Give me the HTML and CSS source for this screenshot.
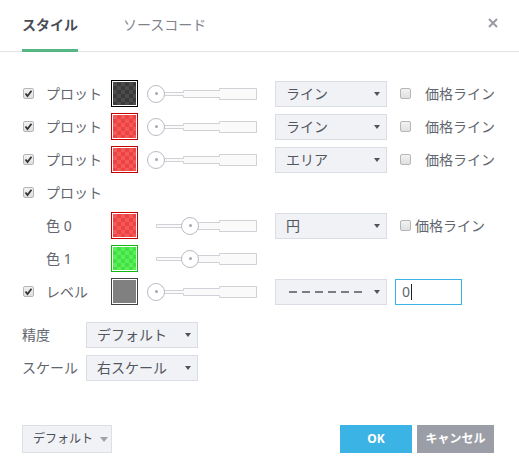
FILE: index.html
```html
<!DOCTYPE html>
<html lang="ja">
<head>
<meta charset="utf-8">
<title>スタイル</title>
<link rel="stylesheet" href="styles.css">
</head>
<body>
<div class="dialog">
  <div class="header">
    <div class="tab active">スタイル</div>
    <div class="tab">ソースコード</div>
    <div class="close"><svg width="10" height="10" viewBox="0 0 10 10"><path d="M1 1L9 9M9 1L1 9" stroke="#9a9ca3" stroke-width="2" fill="none"/></svg></div>
  </div>

  <div class="content">
    <div class="row">
      <span class="cb checked"><svg viewBox="0 0 11 11" width="11" height="11"><path d="M2.5 5.5L4.5 8L8.5 2.8" stroke="#333" stroke-width="1.8" fill="none"/></svg></span>
      <span class="label">プロット</span>
      <span class="swatch sw-dark"><span></span></span>
      <div class="slider"><svg class="track" width="101" height="12" viewBox="0 0 101 12"><path d="M0.5 4.5H27.5V2.5H63.5V0.5H100.5V11.5H63.5V9.5H27.5V7.5H0.5Z" fill="#fafafa" stroke="#cfd1d6"/></svg><span class="thumb"></span></div>
      <div class="select"><span>ライン</span><i class="arrow"></i></div>
      <div class="extra"><span class="cb"></span><span class="label">価格ライン</span></div>
    </div>

    <div class="row">
      <span class="cb checked"><svg viewBox="0 0 11 11" width="11" height="11"><path d="M2.5 5.5L4.5 8L8.5 2.8" stroke="#333" stroke-width="1.8" fill="none"/></svg></span>
      <span class="label">プロット</span>
      <span class="swatch sw-red"><span></span></span>
      <div class="slider"><svg class="track" width="101" height="12" viewBox="0 0 101 12"><path d="M0.5 4.5H27.5V2.5H63.5V0.5H100.5V11.5H63.5V9.5H27.5V7.5H0.5Z" fill="#fafafa" stroke="#cfd1d6"/></svg><span class="thumb"></span></div>
      <div class="select"><span>ライン</span><i class="arrow"></i></div>
      <div class="extra"><span class="cb"></span><span class="label">価格ライン</span></div>
    </div>

    <div class="row">
      <span class="cb checked"><svg viewBox="0 0 11 11" width="11" height="11"><path d="M2.5 5.5L4.5 8L8.5 2.8" stroke="#333" stroke-width="1.8" fill="none"/></svg></span>
      <span class="label">プロット</span>
      <span class="swatch sw-red"><span></span></span>
      <div class="slider"><svg class="track" width="101" height="12" viewBox="0 0 101 12"><path d="M0.5 4.5H27.5V2.5H63.5V0.5H100.5V11.5H63.5V9.5H27.5V7.5H0.5Z" fill="#fafafa" stroke="#cfd1d6"/></svg><span class="thumb"></span></div>
      <div class="select"><span>エリア</span><i class="arrow"></i></div>
      <div class="extra"><span class="cb"></span><span class="label">価格ライン</span></div>
    </div>

    <div class="row">
      <span class="cb checked"><svg viewBox="0 0 11 11" width="11" height="11"><path d="M2.5 5.5L4.5 8L8.5 2.8" stroke="#333" stroke-width="1.8" fill="none"/></svg></span>
      <span class="label">プロット</span>
    </div>

    <div class="row">
      <span></span>
      <span class="label">色 0</span>
      <span class="swatch sw-red"><span></span></span>
      <div class="slider"><svg class="track" width="101" height="12" viewBox="0 0 101 12"><path d="M0.5 4.5H27.5V2.5H63.5V0.5H100.5V11.5H63.5V9.5H27.5V7.5H0.5Z" fill="#fafafa" stroke="#cfd1d6"/></svg><span class="thumb mid"></span></div>
      <div class="select"><span>円</span><i class="arrow"></i></div>
      <div class="extra tight"><span class="cb"></span><span class="label">価格ライン</span></div>
    </div>

    <div class="row">
      <span></span>
      <span class="label">色 1</span>
      <span class="swatch sw-green"><span></span></span>
      <div class="slider"><svg class="track" width="101" height="12" viewBox="0 0 101 12"><path d="M0.5 4.5H27.5V2.5H63.5V0.5H100.5V11.5H63.5V9.5H27.5V7.5H0.5Z" fill="#fafafa" stroke="#cfd1d6"/></svg><span class="thumb mid"></span></div>
    </div>

    <div class="row">
      <span class="cb checked"><svg viewBox="0 0 11 11" width="11" height="11"><path d="M2.5 5.5L4.5 8L8.5 2.8" stroke="#333" stroke-width="1.8" fill="none"/></svg></span>
      <span class="label">レベル</span>
      <span class="swatch sw-gray"><span></span></span>
      <div class="slider"><svg class="track" width="101" height="12" viewBox="0 0 101 12"><path d="M0.5 4.5H27.5V2.5H63.5V0.5H100.5V11.5H63.5V9.5H27.5V7.5H0.5Z" fill="#fafafa" stroke="#cfd1d6"/></svg><span class="thumb"></span></div>
      <div class="select"><span class="dashes"></span><i class="arrow"></i></div>
      <div class="input"><span>0</span><span class="caret"></span></div>
    </div>

    <div class="opts">
      <div class="opt-row">
        <span class="label">精度</span>
        <div class="select"><span>デフォルト</span><i class="arrow"></i></div>
      </div>
      <div class="opt-row">
        <span class="label">スケール</span>
        <div class="select"><span>右スケール</span><i class="arrow"></i></div>
      </div>
    </div>
  </div>

  <div class="footer">
    <div class="btn-default"><span>デフォルト</span><i class="arrow light"></i></div>
    <div class="actions">
      <div class="btn ok">OK</div>
      <div class="btn cancel">キャンセル</div>
    </div>
  </div>
</div>
</body>
</html>
```

FILE: styles.css
```css
html, body {
  margin: 0;
  padding: 0;
  background: #fff;
}
body {
  font-family: "Noto Sans", "Noto Sans CJK JP", sans-serif;
  font-size: 14px;
  color: #62666e;
}
.dialog {
  width: 519px;
  height: 476px;
  display: flex;
  flex-direction: column;
  box-sizing: border-box;
}
.header {
  height: 51px;
  border-bottom: 1px solid #e0e3e8;
  display: flex;
  align-items: flex-start;
  padding-left: 22px;
  padding-right: 21px;
  gap: 45px;
}
.tab {
  height: 52px;
  margin-bottom: -1px;
  box-sizing: border-box;
  border-bottom: 3px solid transparent;
  display: flex;
  align-items: center;
  font-size: 14px;
  color: #80838c;
  line-height: 1;
}
.tab.active {
  color: #4a4d56;
  font-weight: bold;
  border-bottom-color: #56b785;
}
.close {
  margin-left: auto;
  margin-top: 18px;
  width: 10px;
  height: 10px;
  display: flex;
}
.content {
  flex: 1;
  padding: 25px 0 0 22px;
}
.row {
  display: grid;
  grid-template-columns: 24px 65px 36px 128px 120px auto;
  height: 33px;
  align-items: center;
}
.label {
  line-height: 1;
  white-space: nowrap;
}
.cb {
  width: 11px;
  height: 11px;
  box-sizing: border-box;
  border: 1px solid #b4b6ba;
  border-radius: 2px;
  background: linear-gradient(#f2f2f2, #e0e0e0);
  display: block;
  position: relative;
}
.row > .cb {
  margin-left: 1px;
}
.cb.checked svg {
  position: absolute;
  left: -1px;
  top: -1px;
}
.swatch {
  width: 27px;
  height: 27px;
  box-sizing: border-box;
  border: 1px solid #000;
  padding: 1px;
  background: #fff;
  display: block;
}
.swatch > span {
  display: block;
  width: 100%;
  height: 100%;
}
.sw-dark { border-color: #000; }
.sw-dark > span {
  background: conic-gradient(#3a3a3a 25%, #4b4b4b 0 50%, #3a3a3a 0 75%, #4b4b4b 0) 0 0 / 8px 8px;
}
.sw-red { border-color: #c40000; }
.sw-red > span {
  background: conic-gradient(#ef4343 25%, #f25a5a 0 50%, #ef4343 0 75%, #f25a5a 0) 0 0 / 8px 8px;
}
.sw-green { border-color: #12b812; }
.sw-green > span {
  background: conic-gradient(#42e042 25%, #5aee5a 0 50%, #42e042 0 75%, #5aee5a 0) 0 0 / 8px 8px;
}
.sw-gray { border-color: #444; }
.sw-gray > span { background: #808080; }

.slider {
  position: relative;
  height: 18px;
  display: flex;
  align-items: center;
}
.track {
  margin-left: 9px;
  display: block;
}
.thumb {
  position: absolute;
  left: 0;
  top: 0;
  width: 18px;
  height: 18px;
  box-sizing: border-box;
  border: 1px solid #b8bcc5;
  border-radius: 50%;
  background: #fff;
}
.thumb::after {
  content: "";
  position: absolute;
  left: 6.5px;
  top: 6.5px;
  width: 3px;
  height: 3px;
  border-radius: 50%;
  background: #a4a8b1;
}
.thumb.mid {
  left: 34px;
}
.select {
  width: 112px;
  height: 26px;
  box-sizing: border-box;
  border: 1px solid #dadde3;
  background: #f1f2f5;
  display: flex;
  align-items: center;
  justify-content: space-between;
  padding: 0 6px 0 10px;
  color: #52565e;
  line-height: 1;
}
.arrow {
  width: 0;
  height: 0;
  border-left: 3.5px solid transparent;
  border-right: 3.5px solid transparent;
  border-top: 4px solid #50535b;
}
.arrow.light {
  border-top-color: #a0a2a8;
  border-left-width: 4px;
  border-right-width: 4px;
  border-top-width: 5px;
}
.dashes {
  width: 74px;
  height: 2px;
  margin-left: 3px;
  background: repeating-linear-gradient(90deg, #7a7d84 0 8px, transparent 8px 13px);
}
.extra {
  display: flex;
  align-items: center;
  padding-left: 5px;
  gap: 14px;
}
.extra.tight {
  gap: 4px;
}
.input {
  width: 67px;
  height: 26px;
  box-sizing: border-box;
  border: 1px solid #3bb3e4;
  display: flex;
  align-items: center;
  padding-left: 6px;
  color: #62666e;
  line-height: 1;
}
.caret {
  width: 1px;
  height: 16px;
  background: #222;
  margin-left: 1px;
}
.opts {
  margin-top: 10px;
}
.opt-row {
  display: grid;
  grid-template-columns: 64px 112px;
  height: 33px;
  align-items: center;
}
.footer {
  display: flex;
  justify-content: space-between;
  align-items: flex-end;
  padding: 0 25px 23px 22px;
}
.btn-default {
  width: 90px;
  height: 28px;
  box-sizing: border-box;
  border: 1px solid #dcdfe4;
  background: #f1f2f5;
  display: flex;
  align-items: center;
  padding-left: 10px;
  gap: 7px;
  font-size: 12px;
  color: #4a4e57;
  line-height: 1;
}
.actions {
  display: flex;
  gap: 5px;
}
.btn {
  height: 28px;
  display: flex;
  align-items: center;
  justify-content: center;
  color: #fff;
  font-weight: bold;
  font-size: 12px;
  line-height: 1;
}
.btn.ok {
  width: 72px;
  background: #3bb3e4;
}
.btn.cancel {
  width: 77px;
  background: #9b9ea6;
}
```
